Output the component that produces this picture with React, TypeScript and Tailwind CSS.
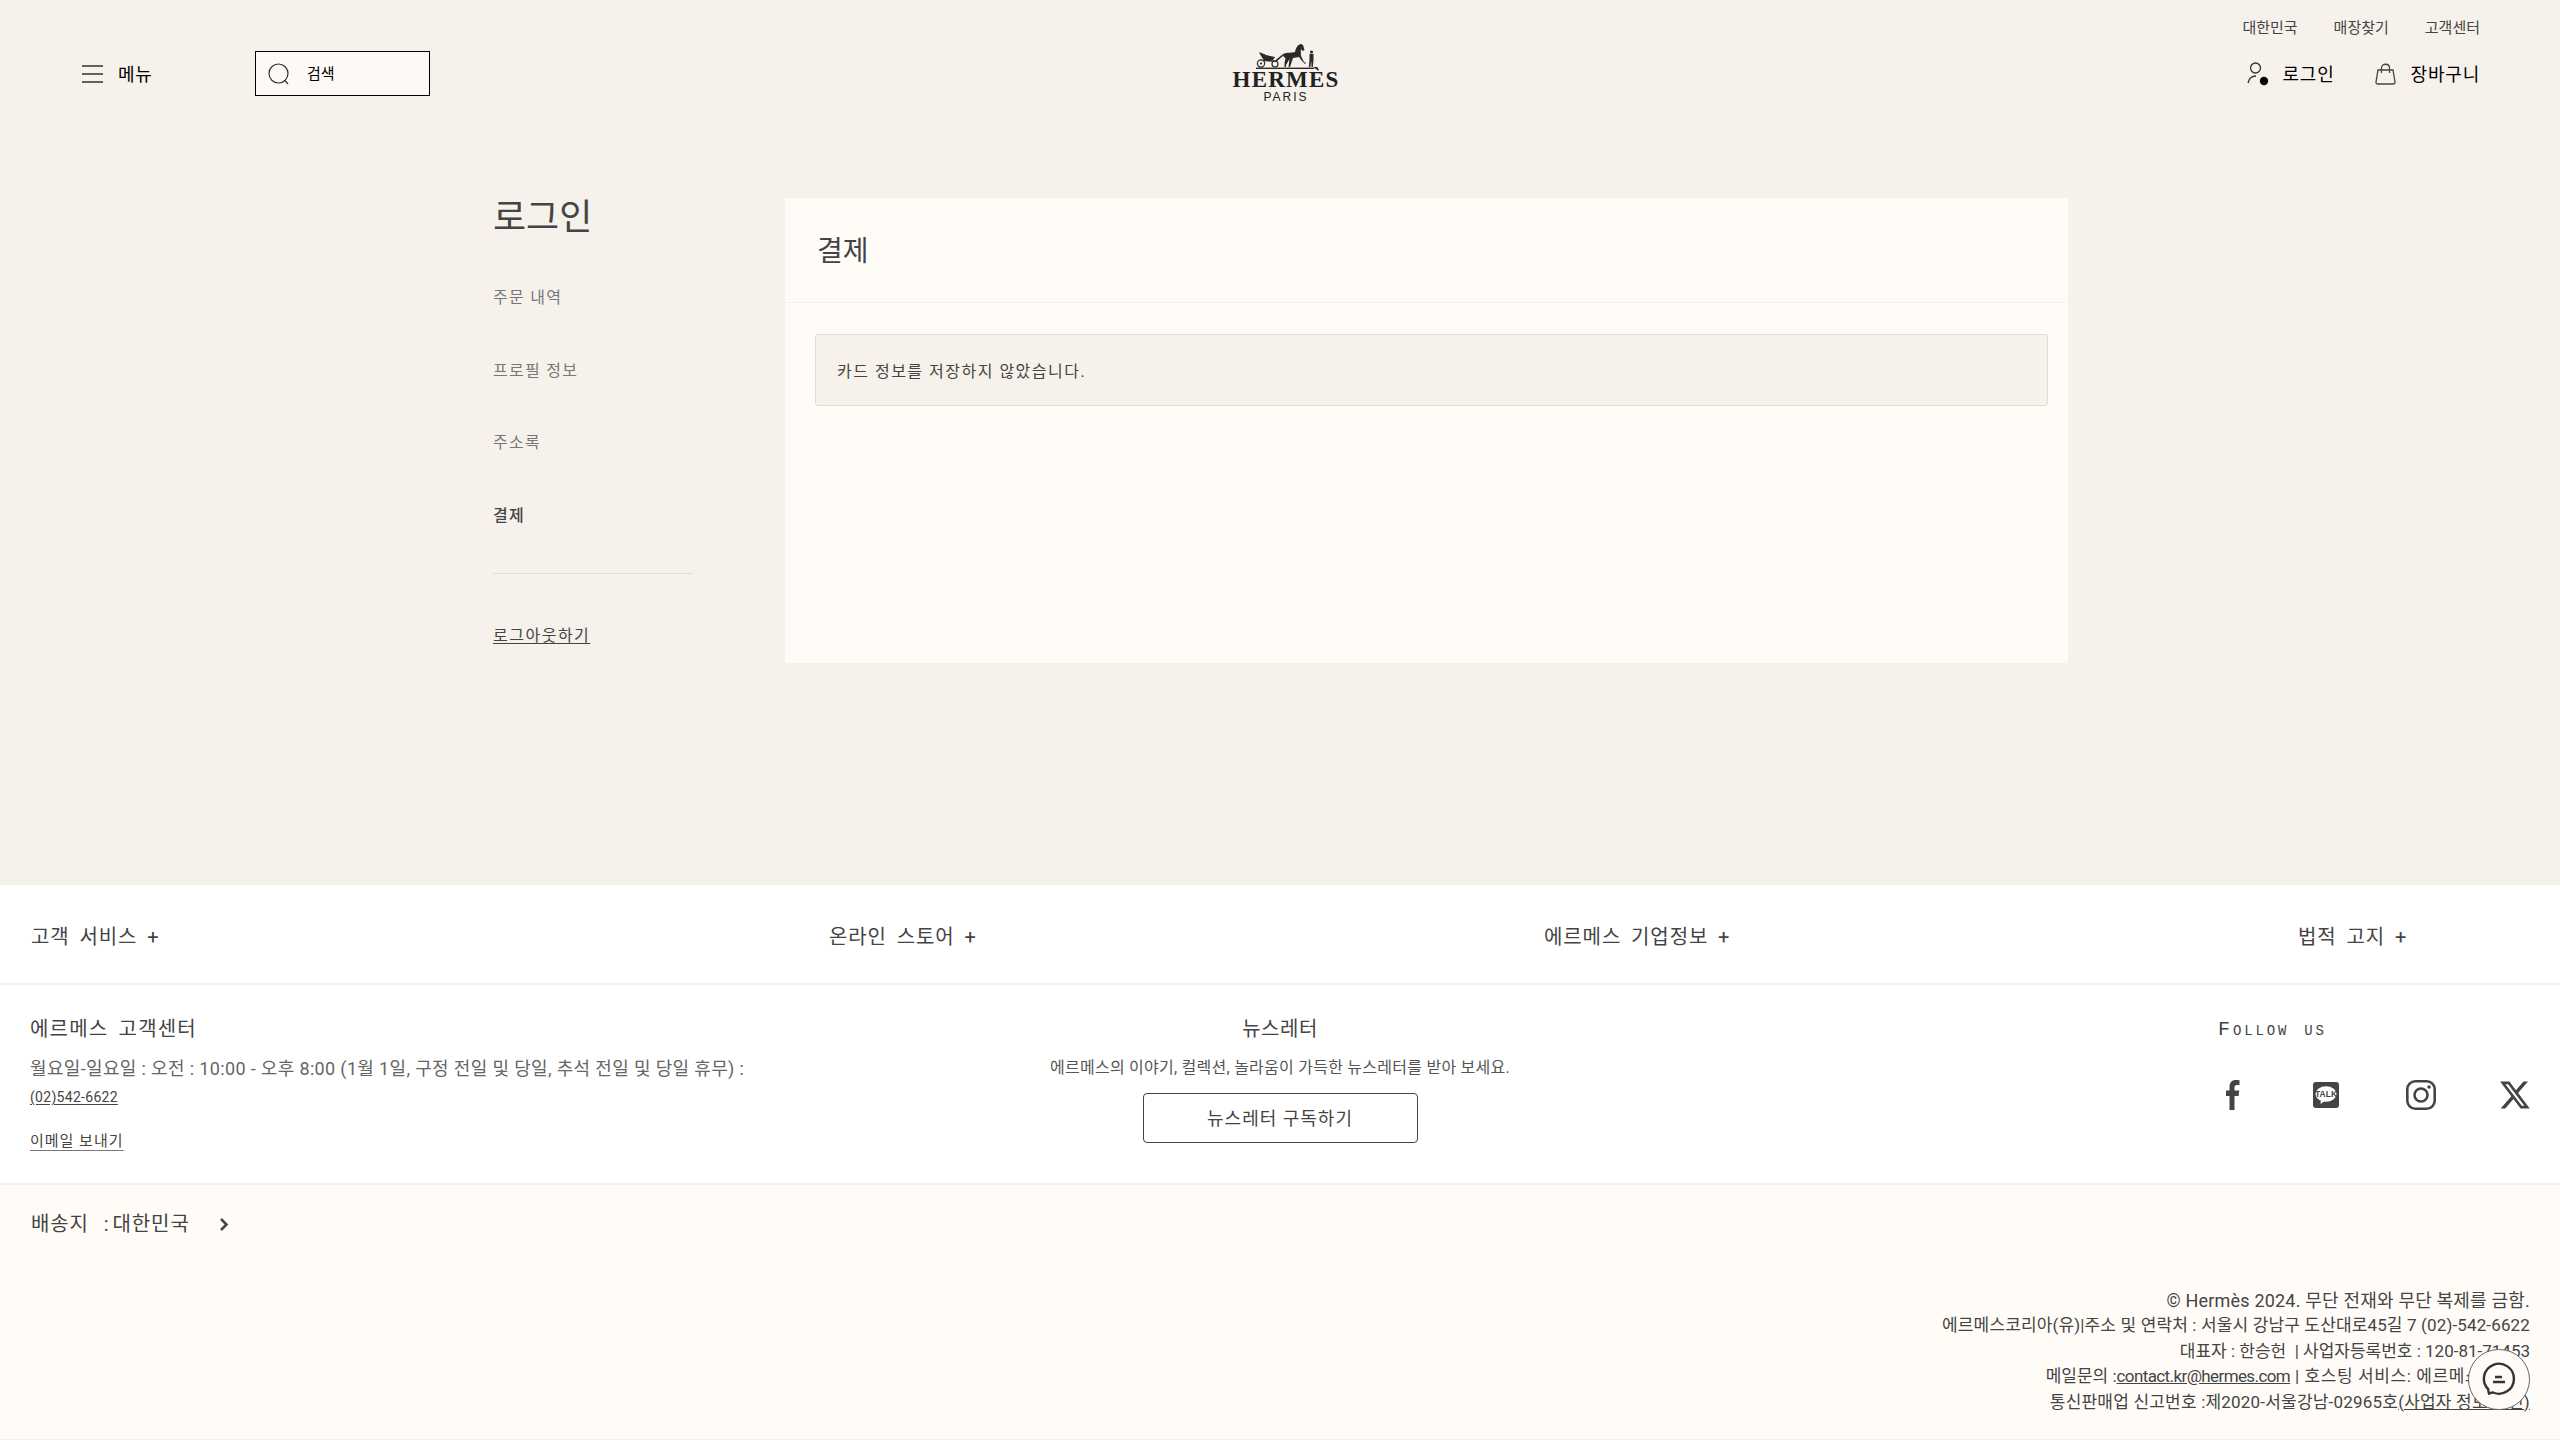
import React from "react";

const ko = "font-['Roboto','Noto_Sans_CJK_KR',sans-serif]";

function Logo() {
  return (
    <div className="flex w-[106px] flex-col items-center pt-[43px] pl-[2px]">
      <svg width="60" height="27" viewBox="0 0 60 27" fill="#2a2a2a">
        <rect x="0" y="24.6" width="58" height="1.4" />
        <circle cx="5" cy="20.5" r="3.6" fill="none" stroke="#2a2a2a" strokeWidth="1.2" />
        <circle cx="5" cy="20.5" r="1.1" />
        <circle cx="19" cy="21" r="3" fill="none" stroke="#2a2a2a" strokeWidth="1.2" />
        <path d="M3 9 L8 11 C12 13 16 13 19 14 L17 17 L10 18 C7 17 5 13 3 9 Z" />
        <path d="M7 18 L20 19 L28 12 L26.5 11.5 L19 17.5 L7 16.5 Z" />
        <path d="M27 11 C31 9 36 10 39 9 C40 5 41 2 45 1 L47 2 L48.5 7 L46.5 8 L45 6 C44.5 9 45 11 45 13 L48 19 L50 20 L49 21 L46 18 L43 14 L37 15 L34 24 L32.5 24 L33.5 16 L30 22 L30 24 L28.5 24 L28.5 20 L29.5 15 C27.5 14 27 13 27 11 Z" />
        <circle cx="55.5" cy="9" r="1.6" />
        <path d="M53.5 11 L57.5 11 L57.5 17 L56.8 24 L55.5 24 L55.3 18 L54.3 24 L52.8 24 L53.5 17 Z" />
      </svg>
      <div className="-mt-[1px] font-['Liberation_Serif',serif] text-[23px] leading-[21px] font-bold tracking-[1.2px] text-[#222]">HERMÈS</div>
      <div className="mt-[1px] font-['Liberation_Sans',sans-serif] text-[12px] leading-[13px] tracking-[2px] text-[#222]">PARIS</div>
    </div>
  );
}

function Header() {
  return (
    <header className="flex h-[130px] text-black">
      <div className="flex w-[1232px] items-start pt-[51px] pl-[82px]">
        <div className="flex h-[45px] w-[173px] items-center">
          <svg width="21" height="18" viewBox="0 0 21 18" stroke="#333" strokeWidth="1.3" fill="none">
            <path d="M0 1h21M0 9h21M0 17h21" />
          </svg>
          <span className="ml-[15px] pt-[2px] text-[18px] tracking-[0.8px]">메뉴</span>
        </div>
        <div className="flex h-[45px] w-[175px] items-center border border-black bg-[#fcf9f6] pl-[12px]">
          <svg width="22" height="22" viewBox="0 0 22 22" stroke="#333" strokeWidth="1.2" fill="none">
            <circle cx="10.5" cy="10.5" r="9.5" />
            <path d="M17 17.5l3 3.5" />
          </svg>
          <span className="ml-[17px] pt-[2px] text-[15px]">검색</span>
        </div>
      </div>
      <Logo />
      <div className="flex flex-1 flex-col items-end pr-[80px]">
        <div className="mt-[18px] flex h-[20px] items-center gap-[36px] text-[15px] text-[#444]">
          <span>대한민국</span>
          <span>매장찾기</span>
          <span>고객센터</span>
        </div>
        <div className="mt-[22px] flex h-[28px] items-center text-[18px] tracking-[0.8px]">
          <svg width="22" height="24" viewBox="0 0 22 24" stroke="#333" strokeWidth="1.3" fill="none">
            <circle cx="8.5" cy="6" r="5" />
            <path d="M1 21c1-5 4-7 8-7" />
            <circle cx="17" cy="19" r="4.2" fill="#000" stroke="none" />
          </svg>
          <span className="ml-[13px] pt-[1px]">로그인</span>
          <svg className="ml-[40px]" width="21" height="22" viewBox="0 0 21 22" stroke="#444" strokeWidth="1.3" fill="none">
            <path d="M3 7h15l2 12c0 1.5-.7 2-2 2H3c-1.300 0-2-.5-2-2z" />
            <path d="M6.500 10V5c0-5 8-5 8 0v5" />
          </svg>
          <span className="ml-[15px] pt-[1px]">장바구니</span>
        </div>
      </div>
    </header>
  );
}

function Main() {
  return (
    <main className="flex h-[755px] pt-[68px] pl-[493px]">
      <aside className="w-[292px]">
        <h1 className="text-[36px] leading-[40px] text-[#444]">로그인</h1>
        <ul className="mt-[48px] text-[16px] leading-[24px] tracking-[1.3px] text-[#777]">
          <li className="h-[73px]">주문 내역</li>
          <li className="h-[72px]">프로필 정보</li>
          <li className="h-[73px]">주소록</li>
          <li className="h-[24px] font-medium text-[#444]">결제</li>
        </ul>
        <div className="mt-[45px] h-[1px] w-[200px] bg-[#e2dcd6]" />
        <a className="mt-[50px] block text-[16px] leading-[24px] tracking-[1.5px] text-[#444] underline underline-offset-2">로그아웃하기</a>
      </aside>
      <section className="h-[465px] w-[1283px] bg-[#fffcf7]">
        <div className="flex h-[105px] items-center border-b border-[#f6f1eb] pt-[4px] pl-[32px] text-[28px] text-[#444]">결제</div>
        <div className="mt-[31px] ml-[30px] flex h-[72px] w-[1233px] items-center rounded-[3px] border border-[#e2dcd6] bg-[#f6f1eb] pt-[3px] pl-[21px] text-[16px] tracking-[1.5px] text-[#444]">
          카드 정보를 저장하지 않았습니다.
        </div>
      </section>
    </main>
  );
}

function Social() {
  return (
    <div className="mt-[36px] flex w-[310px] items-center justify-between text-[#444]">
      <svg className="ml-[6px]" width="14" height="30" viewBox="0 0 14 30" fill="#444">
        <path d="M3.500 30V16H0v-5.500h3.500V6.800C3.500 2.400 6 0 9.800 0c1.800 0 3.300.15 3.700.2v4.700h-2.500c-2 0-2.500 1-2.500 2.400v3.200h4.800l-.7 5.500H8.500v14z" />
      </svg>
      <svg className="ml-[73px]" width="26" height="26" viewBox="0 0 26 26">
        <rect width="26" height="26" rx="3" fill="#444" />
        <ellipse cx="13" cy="12" rx="10.500" ry="7.800" fill="#fff" />
        <path d="M8 17l-.5 5 5-3.500z" fill="#fff" />
        <text x="13" y="15" textAnchor="middle" fontSize="8.500" fontWeight="700" fontFamily="Liberation Sans" fill="#444">TALK</text>
      </svg>
      <svg className="ml-[67px]" width="30" height="30" viewBox="0 0 30 30" fill="none" stroke="#444" strokeWidth="2.600">
        <rect x="1.300" y="1.300" width="27.400" height="27.400" rx="8" />
        <circle cx="15" cy="15" r="6.500" />
        <circle cx="23" cy="7" r="1.800" fill="#444" stroke="none" />
      </svg>
      <svg className="ml-[64px]" width="30" height="28" viewBox="1.200 2.200 21.800 19.600" fill="#444">
        <path d="M18.244 2.250h3.308l-7.227 8.260 8.502 11.240H16.170l-5.214-6.817L4.990 21.750H1.680l7.730-8.835L1.254 2.250H8.080l4.713 6.231zm-1.161 17.520h1.833L7.084 4.126H5.117z" />
      </svg>
    </div>
  );
}

function Footer() {
  return (
    <footer className="text-[#444]">
      <div className="bg-white">
        <div className="grid h-[100px] grid-cols-[798px_715px_754px_1fr] items-center border-b-2 border-[#f6f1eb] pt-[5px] pl-[31px] text-[20px] tracking-[0.9px]">
          <span className="[word-spacing:4px]">고객 서비스 +</span>
          <span className="[word-spacing:4px]">온라인 스토어 +</span>
          <span className="[word-spacing:4px]">에르메스 기업정보 +</span>
          <span className="[word-spacing:4px]">법적 고지 +</span>
        </div>
        <div className="relative flex h-[200px] justify-between border-b-2 border-[#f6f1eb] px-[30px]">
          <div className="pt-[30px]">
            <h3 className="text-[20px] leading-[28px] tracking-[1.200px] [word-spacing:4px]">에르메스 고객센터</h3>
            <p className="mt-[12px] text-[18px] leading-[28px] tracking-[0.350px] text-[#666]">월요일-일요일 : 오전 : 10:00 - 오후 8:00 (1월 1일, 구정 전일 및 당일, 추석 전일 및 당일 휴무) :</p>
            <a className="block text-[14px] leading-[28px] tracking-[0.3px] underline underline-offset-2">(02)542-6622</a>
            <a className="mt-[16px] block text-[15px] leading-[28px] tracking-[1px] underline underline-offset-4 decoration-[#777]">이메일 보내기</a>
          </div>
          <div className="absolute left-[1051px] flex w-[458px] flex-col items-center pt-[30px]">
            <h3 className="text-[20px] leading-[28px] tracking-[0.5px]">뉴스레터</h3>
            <p className="mt-[11px] text-[16px] leading-[28px] tracking-[0.250px] whitespace-nowrap text-[#555]">에르메스의 이야기, 컬렉션, 놀라움이 가득한 뉴스레터를 받아 보세요.</p>
            <button className="mt-[11px] flex h-[50px] w-[275px] items-center justify-center rounded-[4px] border border-[#444] text-[18px] tracking-[1px]">뉴스레터 구독하기</button>
          </div>
          <div className="pt-[31px]">
            <h3 className="-ml-[2px] font-['Liberation_Mono',monospace] text-[20px] leading-[28px] tracking-[2.900px] [font-variant:small-caps]">Follow us</h3>
            <Social />
          </div>
        </div>
      </div>
      <div className="relative h-[254px] bg-[#fffcf7] pr-[30px] pl-[31px]">
        <div className="flex h-[78px] items-center text-[20px] tracking-[0.9px]">
          <span className="[word-spacing:9px]">배송지 :<span className="ml-[3px]">대한민국</span></span>
          <svg className="ml-[29px]" width="10" height="15" viewBox="0 0 10 15" fill="none" stroke="#444" strokeWidth="2.500">
            <path d="M2 2l5.500 5.500L2 13" />
          </svg>
        </div>
        <div className="mt-[25px] text-right text-[17px] leading-[25.400px]">
          <p className="text-[18px] tracking-[0.2px]">© Hermès 2024. 무단 전재와 무단 복제를 금함.</p>
          <p className="tracking-[0.140px]">에르메스코리아(유)|주소 및 연락처 : 서울시 강남구 도산대로45길 7 (02)-542-6622</p>
          <p>대표자 : 한승헌 &nbsp;| 사업자등록번호 : 120-81-71453</p>
          <p>메일문의 :<span className="tracking-[-0.6px] underline">contact.kr@hermes.com</span><span className="tracking-[0.6px]"> | 호스팅 서비스: 에르메스코리아</span></p>
          <p className="tracking-[0.200px]">통신판매업 신고번호 :제2020-서울강남-02965호<span className="underline">(사업자 정보 확인)</span></p>
        </div>
        <button className="absolute top-[164px] right-[30px] flex h-[61px] w-[62px] items-center justify-center rounded-full border border-[#666] bg-[#fffcf7]">
          <svg width="34" height="36" viewBox="0 0 34 36" fill="none" stroke="#333" strokeWidth="2.400">
            <path d="M7 31.500c-.5-1.500-.7-3-.8-4.300A15 15 0 1 1 11 30.500c-1.500.1-2.500.5-4 1z" />
            <path d="M13 15h7M11 20h12" />
          </svg>
        </button>
      </div>
    </footer>
  );
}

export default function App() {
  return (
    <div className={`h-[1440px] w-[2560px] overflow-hidden bg-[#f6f1eb] ${ko}`}>
      <Header />
      <Main />
      <Footer />
    </div>
  );
}
